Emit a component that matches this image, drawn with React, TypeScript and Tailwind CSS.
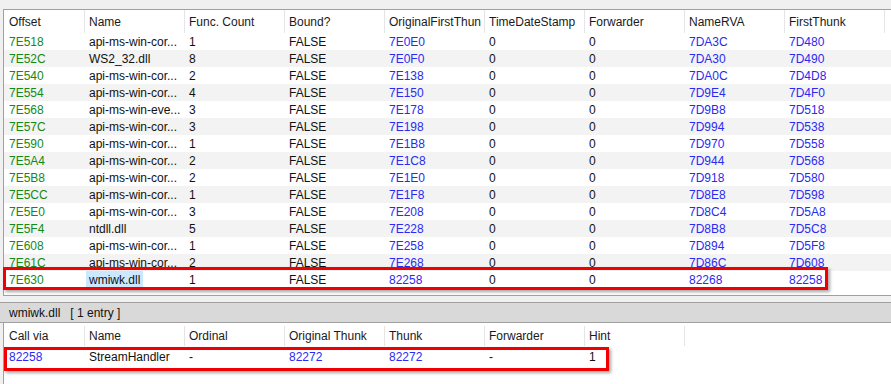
import React from "react";

const G = "text-[#138a13]";
const B = "text-[#2a2af2]";
const K = "text-[#111]";

const top: string[][] = [
  ["7E518", "api-ms-win-cor...", "1", "FALSE", "7E0E0", "0", "0", "7DA3C", "7D480"],
  ["7E52C", "WS2_32.dll", "8", "FALSE", "7E0F0", "0", "0", "7DA30", "7D490"],
  ["7E540", "api-ms-win-cor...", "2", "FALSE", "7E138", "0", "0", "7DA0C", "7D4D8"],
  ["7E554", "api-ms-win-cor...", "4", "FALSE", "7E150", "0", "0", "7D9E4", "7D4F0"],
  ["7E568", "api-ms-win-eve...", "3", "FALSE", "7E178", "0", "0", "7D9B8", "7D518"],
  ["7E57C", "api-ms-win-cor...", "3", "FALSE", "7E198", "0", "0", "7D994", "7D538"],
  ["7E590", "api-ms-win-cor...", "1", "FALSE", "7E1B8", "0", "0", "7D970", "7D558"],
  ["7E5A4", "api-ms-win-cor...", "2", "FALSE", "7E1C8", "0", "0", "7D944", "7D568"],
  ["7E5B8", "api-ms-win-cor...", "2", "FALSE", "7E1E0", "0", "0", "7D918", "7D580"],
  ["7E5CC", "api-ms-win-cor...", "1", "FALSE", "7E1F8", "0", "0", "7D8E8", "7D598"],
  ["7E5E0", "api-ms-win-cor...", "3", "FALSE", "7E208", "0", "0", "7D8C4", "7D5A8"],
  ["7E5F4", "ntdll.dll", "5", "FALSE", "7E228", "0", "0", "7D8B8", "7D5C8"],
  ["7E608", "api-ms-win-cor...", "1", "FALSE", "7E258", "0", "0", "7D894", "7D5F8"],
  ["7E61C", "api-ms-win-cor...", "2", "FALSE", "7E268", "0", "0", "7D86C", "7D608"],
  ["7E630", "wmiwk.dll", "1", "FALSE", "82258", "0", "0", "82268", "82258"],
];
const topColors = [G, K, K, K, B, K, K, B, B];
const topHeads = ["Offset", "Name", "Func. Count", "Bound?", "OriginalFirstThun", "TimeDateStamp", "Forwarder", "NameRVA", "FirstThunk"];
const botHeads = ["Call via", "Name", "Ordinal", "Original Thunk", "Thunk", "Forwarder", "Hint"];
const botRow = ["82258", "StreamHandler", "-", "82272", "82272", "-", "1"];
const botColors = [B, K, K, B, B, K, K];

function colW(i: number) {
  return i === 0 ? "w-[81px] pl-[5px]" : "w-[100px] pl-[4px]";
}

function HeaderRow({ heads, h }: { heads: string[]; h: string }) {
  return (
    <div className={`flex ${h}`}>
      {heads.map((t, i) => (
        <div
          key={i}
          className={`${colW(i)} shrink-0 flex items-center border-r border-[#e5e5e5] overflow-hidden whitespace-nowrap text-[#1a1a1a]`}
        >
          {t}
        </div>
      ))}
    </div>
  );
}

export default function App() {
  return (
    <div
      className="relative w-[891px] h-[384px] overflow-hidden bg-[#f0f0f0] text-[12px] leading-none"
      style={{ fontFamily: '"Liberation Sans", Arial, sans-serif' }}
    >
      <div className="h-[9px]" />
      {/* top table */}
      <div className="ml-[3px] h-[287px] bg-white border-l border-t border-b border-[#a0a0a0] flex flex-col">
        <HeaderRow heads={topHeads} h="h-[23px]" />
        {top.map((r, ri) => (
          <div key={ri} className={`flex h-[17px] ${ri % 2 === 1 ? "bg-[#f3f3f3]" : "bg-white"}`}>
            {r.map((t, i) => (
              <div key={i} className={`${colW(i)} shrink-0 flex items-center overflow-hidden whitespace-nowrap ${topColors[i]}`}>
                {ri === 14 && i === 1 ? (
                  <span className="-ml-[3px] px-[3px] h-[17px] flex items-center bg-[#cce8ff]">{t}</span>
                ) : (
                  t
                )}
              </div>
            ))}
          </div>
        ))}
      </div>
      <div className="h-[6px]" />
      {/* group bar */}
      <div className="h-[21px] bg-[#d9d9d9] border-t border-b border-[#a0a0a0] flex items-center pl-[9px] text-[#111] whitespace-pre">
        {"wmiwk.dll   [ 1 entry ]"}
      </div>
      {/* bottom table */}
      <div className="ml-[3px] h-[62px] bg-white border-l border-[#a0a0a0] flex flex-col">
        <HeaderRow heads={botHeads} h="h-[23px] pt-[3px]" />
        <div className="h-[2px]" />
        <div className="flex h-[17px]">
          {botRow.map((t, i) => (
            <div key={i} className={`${colW(i)} shrink-0 flex items-center whitespace-nowrap ${botColors[i]}`}>
              {t}
            </div>
          ))}
        </div>
      </div>

      {/* annotations */}
      <div className="absolute left-[3px] top-[267px] w-[825px] h-[23px] border-[3px] border-[#f00000] shadow-[2px_2px_3px_rgba(0,0,0,0.35)]" />
      <div className="absolute left-[4px] top-[347px] w-[605px] h-[24px] border-[3px] border-[#f00000] shadow-[2px_2px_3px_rgba(0,0,0,0.35)]" />
    </div>
  );
}
